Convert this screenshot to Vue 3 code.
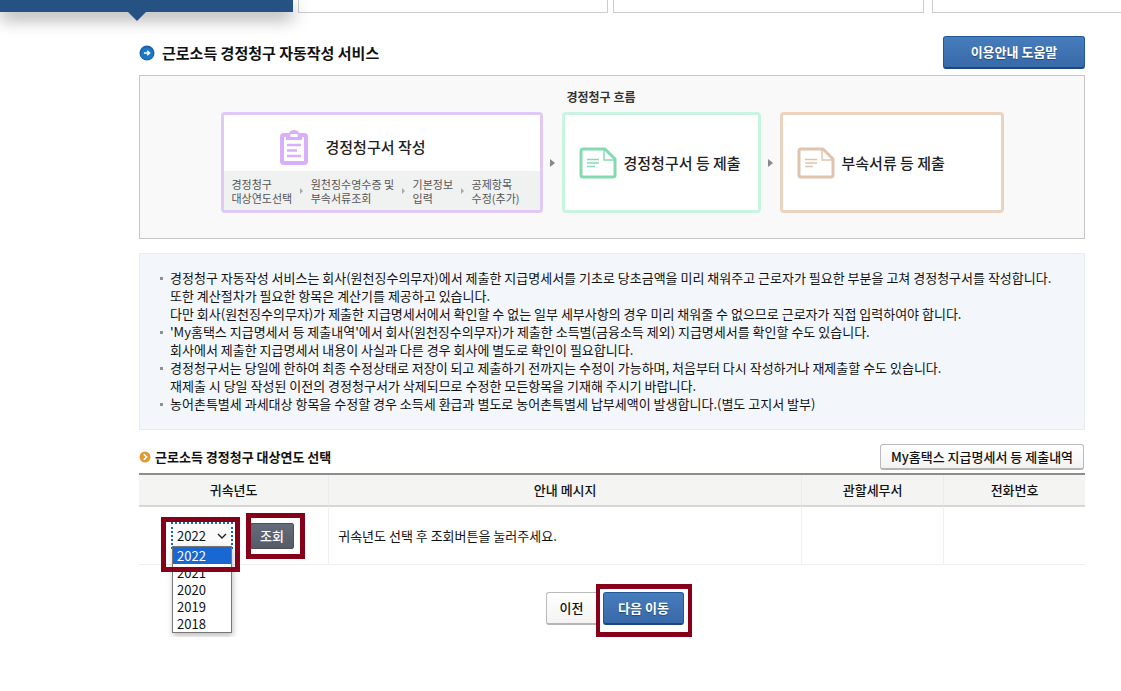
<script setup>
import { ref } from 'vue'

const years = ['2022', '2021', '2020', '2019', '2018']
const year = ref('2022')

const steps = [
  ['경정청구', '대상연도선택'],
  ['원천징수영수증 및', '부속서류조회'],
  ['기본정보', '입력'],
  ['공제항목', '수정(추가)'],
]

const notices = [
  [
    '경정청구 자동작성 서비스는 회사(원천징수의무자)에서 제출한 지급명세서를 기초로 당초금액을 미리 채워주고 근로자가 필요한 부분을 고쳐 경정청구서를 작성합니다.',
    '또한 계산절차가 필요한 항목은 계산기를 제공하고 있습니다.',
    '다만 회사(원천징수의무자)가 제출한 지급명세서에서 확인할 수 없는 일부 세부사항의 경우 미리 채워줄 수 없으므로 근로자가 직접 입력하여야 합니다.',
  ],
  [
    "'My홈택스 지급명세서 등 제출내역'에서 회사(원천징수의무자)가 제출한 소득별(금융소득 제외) 지급명세서를 확인할 수도 있습니다.",
    '회사에서 제출한 지급명세서 내용이 사실과 다른 경우 회사에 별도로 확인이 필요합니다.',
  ],
  [
    '경정청구서는 당일에 한하여 최종 수정상태로 저장이 되고 제출하기 전까지는 수정이 가능하며, 처음부터 다시 작성하거나 재제출할 수도 있습니다.',
    '재제출 시 당일 작성된 이전의 경정청구서가 삭제되므로 수정한 모든항목을 기재해 주시기 바랍니다.',
  ],
  ['농어촌특별세 과세대상 항목을 수정할 경우 소득세 환급과 별도로 농어촌특별세 납부세액이 발생합니다.(별도 고지서 발부)'],
]
</script>

<template>
  <div class="page">
    <div class="tabs">
      <div class="tab active"></div>
      <div class="tab"></div>
      <div class="tab"></div>
      <div class="tab last"></div>
    </div>

    <main>
      <header class="title-row">
        <svg class="title-icon" viewBox="0 0 16 16" aria-hidden="true">
          <circle cx="8" cy="8" r="7.5" fill="#1c5fa8" />
          <circle cx="8" cy="8.5" r="6.2" fill="#1b78c2" />
          <path d="M5 8h5M8.2 5.8 10.6 8 8.2 10.2" fill="none" stroke="#fff" stroke-width="1.4" />
        </svg>
        <h1>근로소득 경정청구 자동작성 서비스</h1>
        <button class="blue help" type="button">이용안내 도움말</button>
      </header>

      <section class="flow">
        <h2>경정청구 흐름</h2>
        <div class="card write">
          <div class="card-head">
            <svg width="28" height="35" viewBox="0 0 28 35" aria-hidden="true">
              <rect x="2" y="5" width="24" height="28" rx="2" fill="#fff" stroke="#d9aefa" stroke-width="4" />
              <path d="M6 3h3c1-4 9-4 10 0h3v7H6z" fill="#d9aefa" />
              <rect x="10" y="4" width="8" height="3" rx="1.5" fill="#fff" />
              <path d="M7 15h14M7 20.500h10M7 26h14" stroke="#d9aefa" stroke-width="2.400" />
            </svg>
            <strong>경정청구서 작성</strong>
          </div>
          <div class="steps">
            <template v-for="(s, i) in steps" :key="i">
              <i v-if="i" class="tri small"></i>
              <span>{{ s[0] }}<br />{{ s[1] }}</span>
            </template>
          </div>
        </div>
        <i class="tri first"></i>
        <div class="card submit">
          <svg width="38" height="32" viewBox="0 0 38 32" aria-hidden="true">
            <path d="M4 2h22l10 10v16q0 2-2 2H4q-2 0-2-2V4q0-2 2-2z" fill="#fff" stroke="#84dbb2" stroke-width="3" stroke-linejoin="round" />
            <path d="M25 2v11h11M8 12.500h12M8 16h12M8 19.500h8" fill="none" stroke="#84dbb2" stroke-width="1.400" />
          </svg>
          <strong>경정청구서 등 제출</strong>
        </div>
        <i class="tri second"></i>
        <div class="card attach">
          <svg width="38" height="32" viewBox="0 0 38 32" aria-hidden="true">
            <path d="M4 2h22l10 10v16q0 2-2 2H4q-2 0-2-2V4q0-2 2-2z" fill="#fff" stroke="#dfc3ae" stroke-width="3" stroke-linejoin="round" />
            <path d="M25 2v11h11M8 12.500h12M8 16h12M8 19.500h8" fill="none" stroke="#dfc3ae" stroke-width="1.400" />
          </svg>
          <strong>부속서류 등 제출</strong>
        </div>
      </section>

      <ul class="notice">
        <li v-for="(n, i) in notices" :key="i">
          <p v-for="line in n" :key="line">{{ line }}</p>
        </li>
      </ul>

      <div class="section-row">
        <svg class="section-icon" viewBox="0 0 12 12" aria-hidden="true">
          <circle cx="6" cy="6" r="5.500" fill="#e09a35" />
          <path d="M4.800 3.200 7.600 6 4.800 8.800" fill="none" stroke="#fff" stroke-width="1.600" />
        </svg>
        <h2>근로소득 경정청구 대상연도 선택</h2>
        <button class="light mine" type="button">My홈택스 지급명세서 등 제출내역</button>
      </div>

      <table>
        <thead>
          <tr>
            <th class="c-year">귀속년도</th>
            <th class="c-msg">안내 메시지</th>
            <th>관할세무서</th>
            <th>전화번호</th>
          </tr>
        </thead>
        <tbody>
          <tr>
            <td>
              <div class="picker">
                <div class="year-box">
                  <select v-model="year" aria-label="귀속년도">
                    <option v-for="y in years" :key="y">{{ y }}</option>
                  </select>
                  <svg class="chevron" viewBox="0 0 10 6" aria-hidden="true">
                    <path d="M1 1l4 4 4-4" fill="none" stroke="#222" stroke-width="1.400" />
                  </svg>
                  <ul class="menu" role="listbox" aria-label="귀속년도 목록">
                    <li v-for="y in years" :key="y" role="option" :aria-selected="y === year" :class="{ on: y === year }" @click="year = y">{{ y }}</li>
                  </ul>
                  <span class="mark mark-year"></span>
                </div>
                <div class="search-box">
                  <button class="search" type="button">조회</button>
                  <span class="mark mark-search"></span>
                </div>
              </div>
            </td>
            <td class="msg">귀속년도 선택 후 조회버튼을 눌러주세요.</td>
            <td></td>
            <td></td>
          </tr>
        </tbody>
      </table>

      <div class="actions">
        <button class="light prev" type="button">이전</button>
        <div class="next-box">
          <button class="blue next" type="button">다음 이동</button>
        </div>
      </div>
    </main>
  </div>
</template>

<style>
body {
  margin: 0;
  background: #fff;
}
</style>

<style scoped>
.page {
  font-family: "Noto Sans CJK KR", sans-serif;
  font-size: 13px;
  line-height: 18px;
  color: #111;
  overflow: hidden;
}
.page * {
  box-sizing: border-box;
}
h1, h2, p, ul {
  margin: 0;
  padding: 0;
}
ul {
  list-style: none;
}
button, select {
  font-family: inherit;
  font-size: 13px;
  line-height: 18px;
  padding: 0;
}
.tabs {
  display: grid;
  grid-template-columns: 293fr 310fr 311fr 192fr;
  column-gap: 5px;
  height: 13px;
}
.tab {
  border: 1px solid #ccc;
  border-top: 0;
}
.tab.last {
  margin-left: 3px;
  border-right: 0;
}
.tab.active {
  position: relative;
  height: 12px;
  border: 0;
  background: #265183;
  box-shadow: 0 6px 18px rgba(0, 0, 0, 0.4);
}
.tab.active::after {
  content: "";
  position: absolute;
  left: 128px;
  top: 12px;
  border: 9px solid transparent;
  border-top-color: #265183;
  border-bottom: 0;
}
main {
  margin: 0 36px 0 139px;
}
.title-row {
  display: flex;
  align-items: center;
  padding-top: 23px;
}
.title-icon {
  width: 16px;
  height: 16px;
}
h1 {
  font-size: 15px;
  line-height: 20px;
  margin-left: 7px;
}
.blue {
  border: 1px solid #235896;
  border-bottom: 2px solid #1d467d;
  border-radius: 3px;
  background: linear-gradient(#477dbd, #3869a9);
  color: #fff;
  font-weight: 700;
  text-shadow: 0 1px 1px #204a7c;
}
.help {
  width: 142px;
  height: 33px;
  margin-left: auto;
}
.flow {
  display: grid;
  grid-template-columns: 322px 19px 199px 19px 224px;
  grid-template-rows: 18px 101px;
  row-gap: 6px;
  justify-content: center;
  align-items: center;
  margin-top: 6px;
  padding: 12px 0 25px;
  border: 1px solid #c6c6c6;
  background: #f9f9f9;
}
.flow h2 {
  grid-column: 3;
  font-size: 12px;
  padding-left: 5px;
  color: #333;
}
.card {
  grid-row: 2;
  height: 101px;
  border: 3px solid;
  border-radius: 4px;
  background: #fff;
}
.card strong {
  font-size: 15px;
  line-height: 24px;
  font-weight: 500;
  color: #222;
  white-space: nowrap;
}
.write {
  grid-column: 1;
  border-color: #e0c9f5;
}
.submit, .attach {
  display: flex;
  align-items: center;
  gap: 7px;
  padding-left: 14px;
}
.submit {
  border-color: #c9f4e1;
}
.attach {
  border-color: #ecd3bf;
}
.card-head {
  display: flex;
  align-items: center;
  gap: 18px;
  height: 56px;
  padding: 8px 0 0 56px;
}
.steps {
  display: flex;
  align-items: center;
  justify-content: space-between;
  height: 39px;
  padding: 0 20px 0 8px;
  background: #f0f1f1;
  font-size: 11px;
  line-height: 14px;
  color: #555;
  white-space: nowrap;
}
.tri {
  grid-row: 2;
  justify-self: center;
  border: 4px solid transparent;
  border-left: 5px solid #888;
  border-right: 0;
}
.tri.small {
  border-width: 3px;
  border-left: 3px solid #aaa;
  border-right: 0;
}
.tri.first {
  grid-column: 2;
}
.tri.second {
  grid-column: 4;
}
.notice {
  margin-top: 14px;
  padding: 15px 8px 16px 30px;
  border: 1px solid #e4edf4;
  background: #f3f7fc;
}
.notice li {
  position: relative;
}
.notice li::before {
  content: "";
  position: absolute;
  left: -10px;
  top: 8px;
  width: 3px;
  height: 3px;
  background: #8c8f94;
}
.notice p {
  white-space: nowrap;
}
.section-row {
  display: flex;
  align-items: center;
  padding: 14px 1px 3px 0;
}
.section-icon {
  width: 12px;
  height: 12px;
}
.section-row h2 {
  font-size: 13px;
  margin-left: 4px;
}
.light {
  border: 1px solid #bbb;
  border-bottom: 2px solid #b5b5b5;
  border-radius: 3px;
  background: linear-gradient(#fff, #f3f3f3);
  color: #111;
  font-weight: 500;
}
.mine {
  width: 204px;
  height: 26px;
  margin-left: auto;
  white-space: nowrap;
}
table {
  width: 100%;
  table-layout: fixed;
  border-collapse: separate;
  border-spacing: 0;
  border-top: 2px solid #8b8f8b;
}
th {
  height: 32px;
  padding: 0;
  background: #f4f4f2;
  border-bottom: 2px solid #d7d7d7;
  border-left: 1px solid #ececec;
  font-weight: 500;
}
th:first-child, td:first-child {
  border-left: 0;
}
.c-year {
  width: 20%;
}
.c-msg {
  width: 50%;
}
td {
  height: 58px;
  padding: 0;
  border-bottom: 1px solid #eee;
  border-left: 1px solid #f1f1f1;
}
td.msg {
  padding-left: 9px;
}
.picker {
  display: flex;
  align-items: center;
  gap: 17px;
  padding-left: 32px;
}
.year-box, .search-box, .next-box {
  position: relative;
}
.year-box {
  width: 62px;
  height: 27px;
}
select {
  appearance: none;
  width: 62px;
  height: 27px;
  padding-left: 4px;
  border: 2px dotted #1769a8;
  border-radius: 0;
  background: #fafafa;
  color: #111;
}
.chevron {
  position: absolute;
  right: 6px;
  top: 11px;
  width: 10px;
  height: 6px;
}
.menu {
  position: absolute;
  z-index: 1;
  left: 1px;
  top: 24px;
  width: 60px;
  border: 1px solid #777;
  background: #fff;
  box-shadow: 1px 3px 6px rgba(0, 0, 0, 0.25);
}
.menu li {
  padding-left: 4px;
  line-height: 17px;
}
.menu .on {
  background: #1967d2;
  color: #fff;
}
.mark {
  position: absolute;
  z-index: 2;
  border: 5px solid #850018;
  pointer-events: none;
}
.mark-year {
  left: -10px;
  top: -5px;
  width: 79px;
  height: 55px;
}
.mark-search {
  left: -4px;
  top: -10px;
  width: 59px;
  height: 46px;
}
.search {
  display: block;
  width: 44px;
  height: 26px;
  border: 1px solid #4b515d;
  border-radius: 2px;
  background: linear-gradient(#656c79, #555c68);
  color: #fff;
  font-weight: 500;
}
.actions {
  display: flex;
  justify-content: center;
  align-items: center;
  margin-top: 19px;
  padding-left: 14px;
}
.prev {
  width: 50px;
  height: 33px;
  margin-bottom: 5px;
  border-right: 0;
  border-radius: 3px 0 0 3px;
}
.next-box {
  width: 96px;
  height: 53px;
  padding: 3px;
  border: 5px solid #850018;
  border-width: 5px 4px;
  background: #fff;
}
.next {
  width: 81px;
  height: 33px;
}
</style>
